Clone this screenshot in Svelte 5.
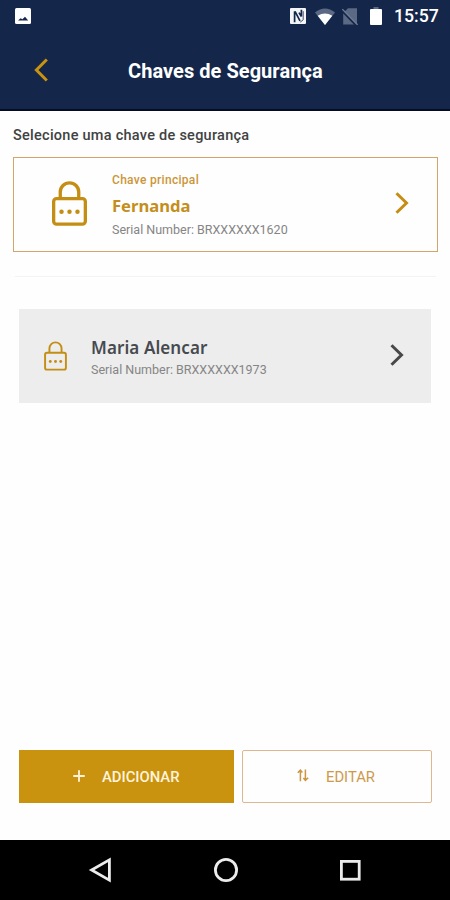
<script>
  // Security keys of the user
  const mainKey = { name: 'Fernanda', serial: 'BRXXXXXX1620' };
  const otherKeys = [{ name: 'Maria Alencar', serial: 'BRXXXXXX1973' }];
</script>

<!-- Padlock with three dots, used by every key card -->
{#snippet lock(size)}
  <svg class="lock {size}" viewBox="0 0 36 46">
    <path d="M8.5 18V11.2a9.5 9.5 0 0 1 19 0V18" />
    <rect x="1.7" y="18" width="32.6" height="26.3" rx="3" />
    <circle cx="9.8" cy="31.5" r="2.3" />
    <circle cx="18" cy="31.5" r="2.3" />
    <circle cx="26.2" cy="31.5" r="2.3" />
  </svg>
{/snippet}

{#snippet chevron()}
  <svg class="chevron" viewBox="0 0 14 22">
    <path d="M1.5 1.2 L11.5 11 L1.5 20.8" />
  </svg>
{/snippet}

<div class="screen">
  <div class="top">
    <!-- Status bar -->
    <div class="status-bar">
      <svg class="picture" viewBox="0 0 16 16">
        <rect width="16" height="16" rx="1.5" fill="#fff" />
        <path d="M3 12.6 L5.6 10.2 L7.4 11.2 L10 8.8 L13.2 12.6z" fill="#14274b" />
      </svg>
      <svg class="nfc" viewBox="0 0 16 16">
        <rect width="16" height="16" rx="1" fill="#f4f5f7" />
        <path
          d="M4.6 14.2V3.2M5 3.4l5 9.4M11.4 1.8V8.6M9 4.6l2.4 4"
          fill="none"
          stroke="#14274b"
          stroke-width="1.7"
        />
        <path d="M13.2 3.2v8.6l-3 2.4" fill="none" stroke="#14274b" stroke-width="0.8" />
      </svg>
      <svg class="wifi" viewBox="0 0 20 17">
        <path d="M10 17 L0 4.4 Q10 -3.6 20 4.4z" fill="#5b6985" />
        <path d="M10 17 L2.7 7.7 Q10 3.4 17.3 7.7z" fill="#fff" />
      </svg>
      <svg class="sim" viewBox="0 0 16 17">
        <path d="M6 0.2H15V16.4H1.2V5z" fill="#5b6985" />
        <path d="M0 3 L14.4 17.8" stroke="#14274b" stroke-width="1.8" />
        <path d="M0.4 1.2 L15.6 16.8" stroke="#6f7c95" stroke-width="1.2" />
      </svg>
      <svg class="battery" viewBox="0 0 12 18">
        <path d="M3.5 0h5v2h-5z" fill="#5b6985" />
        <rect y="2" width="12" height="16" rx="1" fill="#fff" />
      </svg>
      <span class="time">15:57</span>
    </div>

    <!-- Title bar -->
    <header>
      <svg class="back" viewBox="0 0 14 24">
        <path d="M12.8 1.5 L2.4 12 L12.8 22.5" />
      </svg>
      <h1>Chaves de Segurança</h1>
    </header>
  </div>

  <main>
    <p class="hint">Selecione uma chave de segurança</p>

    <!-- Main key -->
    <div class="card main-card">
      {@render lock('big')}
      <div class="info">
        <span class="tag">Chave principal</span>
        <span class="name">{mainKey.name}</span>
        <span class="serial">Serial Number: {mainKey.serial}</span>
      </div>
      {@render chevron()}
    </div>

    <hr />

    <!-- Other keys -->
    {#each otherKeys as key}
      <div class="card other-card">
        {@render lock('small')}
        <div class="info">
          <span class="name">{key.name}</span>
          <span class="serial">Serial Number: {key.serial}</span>
        </div>
        {@render chevron()}
      </div>
    {/each}

    <!-- Actions -->
    <div class="actions">
      <button class="add">
        <svg class="plus" viewBox="0 0 12 12">
          <path d="M6 0.3V11.7M0.3 6H11.7" />
        </svg>
        ADICIONAR
      </button>
      <button class="edit">
        <svg class="arrows" viewBox="0 0 12 13">
          <path d="M3.4 12.3V1.6M0.8 3.8L3.4 1.2L5.4 3.4M8.4 0.4V11.2M6.4 9L8.4 11.4L11.2 8.8" />
        </svg>
        EDITAR
      </button>
    </div>
  </main>

  <!-- Android navigation -->
  <nav>
    <svg viewBox="0 0 26 26"><path d="M21.4 2.8V23.2L3.6 13z" /></svg>
    <svg viewBox="0 0 26 26"><circle cx="13" cy="13" r="10.6" /></svg>
    <svg viewBox="0 0 26 26"><rect x="4.4" y="4.4" width="17.8" height="17.8" /></svg>
  </nav>
</div>

<style>
  :global(body) {
    margin: 0;
    background: #fefefe;
  }

  .screen {
    display: flex;
    flex-direction: column;
    width: 450px;
    height: 900px;
    background: #fefefe;
    font-family: Roboto, 'Liberation Sans', sans-serif;
  }

  svg {
    display: block;
    flex: none;
  }

  /* Dark blue area on top */
  .top {
    box-sizing: border-box;
    height: 111px;
    background: #14274b;
    border-bottom: 2px solid #050d24;
  }

  .status-bar {
    display: flex;
    align-items: center;
    height: 32px;
    padding: 0 12px 0 15px;
  }

  .picture {
    width: 16px;
    height: 16px;
    margin: -1px auto 0 0;
  }

  .nfc {
    width: 16px;
    height: 16px;
    margin-right: 9px;
  }

  .wifi {
    width: 20px;
    height: 17px;
    margin-right: 7px;
  }

  .sim {
    width: 16px;
    height: 17px;
    margin-right: 12px;
  }

  .battery {
    width: 12px;
    height: 18px;
    margin-right: 12px;
  }

  .time {
    width: 44px;
    color: #fff;
    font-size: 17.7px;
    font-weight: 500;
    line-height: 32px;
    white-space: nowrap;
  }

  header {
    display: flex;
    align-items: center;
    height: 77px;
    padding-left: 34px;
  }

  .back {
    width: 14px;
    height: 24px;
    margin-top: -2px;
    fill: none;
    stroke: #c9930f;
    stroke-width: 3;
  }

  h1 {
    margin: 0 0 0 80px;
    color: #fff;
    font-size: 20px;
    font-weight: 700;
    letter-spacing: 0.05px;
    line-height: 24px;
    white-space: nowrap;
  }

  main {
    display: flex;
    flex: 1;
    flex-direction: column;
  }

  .hint {
    margin: 15px 0 11px 13px;
    color: #424242;
    font-size: 14.5px;
    font-weight: 500;
    letter-spacing: 0.26px;
    line-height: 20px;
    white-space: nowrap;
  }

  .card {
    display: flex;
    align-items: center;
    box-sizing: border-box;
    height: 95px;
  }

  .main-card {
    margin: 0 12px 0 13px;
    padding: 0 28px 0 38px;
    border: 1.5px solid #d3a568;
  }

  .other-card {
    height: 94px;
    margin: 0 19px;
    padding: 0 27px 0 25px;
    background: #ededed;
  }

  .info {
    display: flex;
    flex: 1;
    flex-direction: column;
    white-space: nowrap;
  }

  .lock {
    fill: none;
    stroke: #c48e14;
    stroke-width: 3.4;
  }

  .lock circle {
    fill: #c48e14;
    stroke: none;
  }

  .lock.big {
    width: 35px;
    height: 45px;
    margin: -2px 25px 0 0;
  }

  .lock.small {
    width: 23px;
    height: 30px;
    margin-right: 24px;
    stroke-width: 3;
  }

  .chevron {
    width: 14px;
    height: 22px;
    margin-top: -3px;
    fill: none;
    stroke: #c48e14;
    stroke-width: 3;
  }

  .other-card .chevron {
    margin-top: -2px;
    stroke: #484848;
  }

  .tag {
    color: #cb963a;
    font-size: 12px;
    font-weight: 500;
    letter-spacing: 0.3px;
    line-height: 16px;
  }

  .name {
    color: #c48e1c;
    font-family: 'Noto Sans', 'Open Sans', sans-serif;
    font-size: 16.6px;
    font-weight: 700;
    line-height: 24px;
    margin: 6px 0 4px;
  }

  .other-card .name {
    margin: 0 0 2px;
    color: #464a50;
    font-size: 17px;
    font-weight: 600;
    letter-spacing: 0.1px;
  }

  .other-card .info {
    margin-top: 2px;
  }

  .serial {
    color: #858585;
    font-size: 12.5px;
    line-height: 16px;
  }

  hr {
    width: 421px;
    height: 1px;
    margin: 24px 0 32px 15px;
    border: 0;
    background: #f3f3f3;
  }

  .actions {
    display: flex;
    gap: 8px;
    margin: auto 18px 37px 19px;
  }

  button {
    display: flex;
    align-items: center;
    box-sizing: border-box;
    height: 53px;
    padding: 0;
    font-family: inherit;
    font-size: 14.8px;
    white-space: nowrap;
  }

  .add {
    width: 215px;
    padding-left: 54px;
    border: 0;
    background: #c9930f;
    color: #fff3dc;
    font-weight: 500;
  }

  .edit {
    flex: 1;
    padding-left: 54px;
    border: 1.5px solid #dcb790;
    border-radius: 2px;
    background: #fefefe;
    color: #cc9a4a;
  }

  .plus {
    width: 12px;
    height: 12px;
    margin: -2px 17px 0 0;
    fill: none;
    stroke: #fff3dc;
    stroke-width: 1.8;
  }

  .arrows {
    width: 12px;
    height: 13px;
    margin: -2px 17px 0 0;
    fill: none;
    stroke: #cc9540;
    stroke-width: 1.5;
  }

  nav {
    display: flex;
    align-items: center;
    justify-content: space-between;
    height: 60px;
    padding: 0 87px 0 88px;
    background: #000;
  }

  nav svg {
    width: 26px;
    height: 26px;
    fill: none;
    stroke: #ececec;
    stroke-width: 2.8;
  }
</style>
